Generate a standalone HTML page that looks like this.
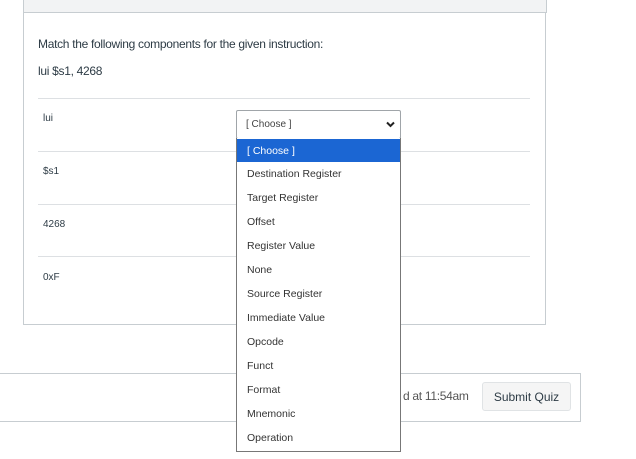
<!DOCTYPE html>
<html><head><style>
body{margin:0;width:636px;height:459px;background:#fff;position:relative;overflow:hidden;font-family:"Liberation Sans",sans-serif;color:#2d3b45}
.a{position:absolute}
.hdr{left:23px;top:-1px;width:522px;height:13px;background:#f2f3f4;border:1px solid #c7cdd1;border-top:none}
.box{left:23px;top:12px;width:521px;height:312px;border:1px solid #c7cdd1;border-top:none}
.sep{left:38px;width:492px;height:1px;background:#dde0e3}
.t{font-size:12px;letter-spacing:-0.3px}
.lbl{font-size:10px;left:43px}
.sel{left:236px;top:110px;width:163px;height:27px;border:1px solid #a0a5a9;border-radius:2px;background:#fff;font-size:10px;line-height:27px}
.dd{left:236px;top:138px;width:163px;height:313px;border:1px solid #777;border-top:none;background:#fff;z-index:5}
.it{height:24px;line-height:24px;font-size:10.5px;padding-left:10px;color:#333}
.it.h{background:#1b66d3;color:#fff;margin-top:1px;height:23px;line-height:25px}
.foot{left:-1px;top:373px;width:580px;height:47px;border:1px solid #c7cdd1}
.btn{left:482px;top:382px;width:89px;height:29px;background:#f5f5f5;border:1px solid #e0e3e5;border-radius:3px;font-size:12px;text-align:center;line-height:29px;box-sizing:border-box}
</style></head><body>
<div class="a hdr"></div>
<div class="a box"></div>
<div class="a t" style="left:38px;top:37px">Match the following components for the given instruction:</div>
<div class="a t" style="left:38px;top:64px">lui $s1, 4268</div>
<div class="a sep" style="top:98px"></div>
<div class="a sep" style="top:151px"></div>
<div class="a sep" style="top:204px"></div>
<div class="a sep" style="top:256px"></div>
<div class="a lbl" style="top:113px">lui</div>
<div class="a lbl" style="top:166px">$s1</div>
<div class="a lbl" style="top:219px">4268</div>
<div class="a lbl" style="top:272px">0xF</div>
<div class="a sel"><span style="padding-left:9px;color:#444">[ Choose ]</span>
<svg class="a" style="right:5px;top:10px" width="9" height="7" viewBox="0 0 9 7"><path d="M1 1.5L4.5 5L8 1.5" stroke="#222" stroke-width="2" fill="none"/></svg></div>
<div class="a foot"></div>
<div class="a t" style="left:403px;top:389px;color:#555">d at 11:54am</div>
<div class="a btn">Submit Quiz</div>
<div class="a dd">
<div class="it h">[ Choose ]</div>
<div class="it">Destination Register</div>
<div class="it">Target Register</div>
<div class="it">Offset</div>
<div class="it">Register Value</div>
<div class="it">None</div>
<div class="it">Source Register</div>
<div class="it">Immediate Value</div>
<div class="it">Opcode</div>
<div class="it">Funct</div>
<div class="it">Format</div>
<div class="it">Mnemonic</div>
<div class="it">Operation</div>
</div>
</body></html>
